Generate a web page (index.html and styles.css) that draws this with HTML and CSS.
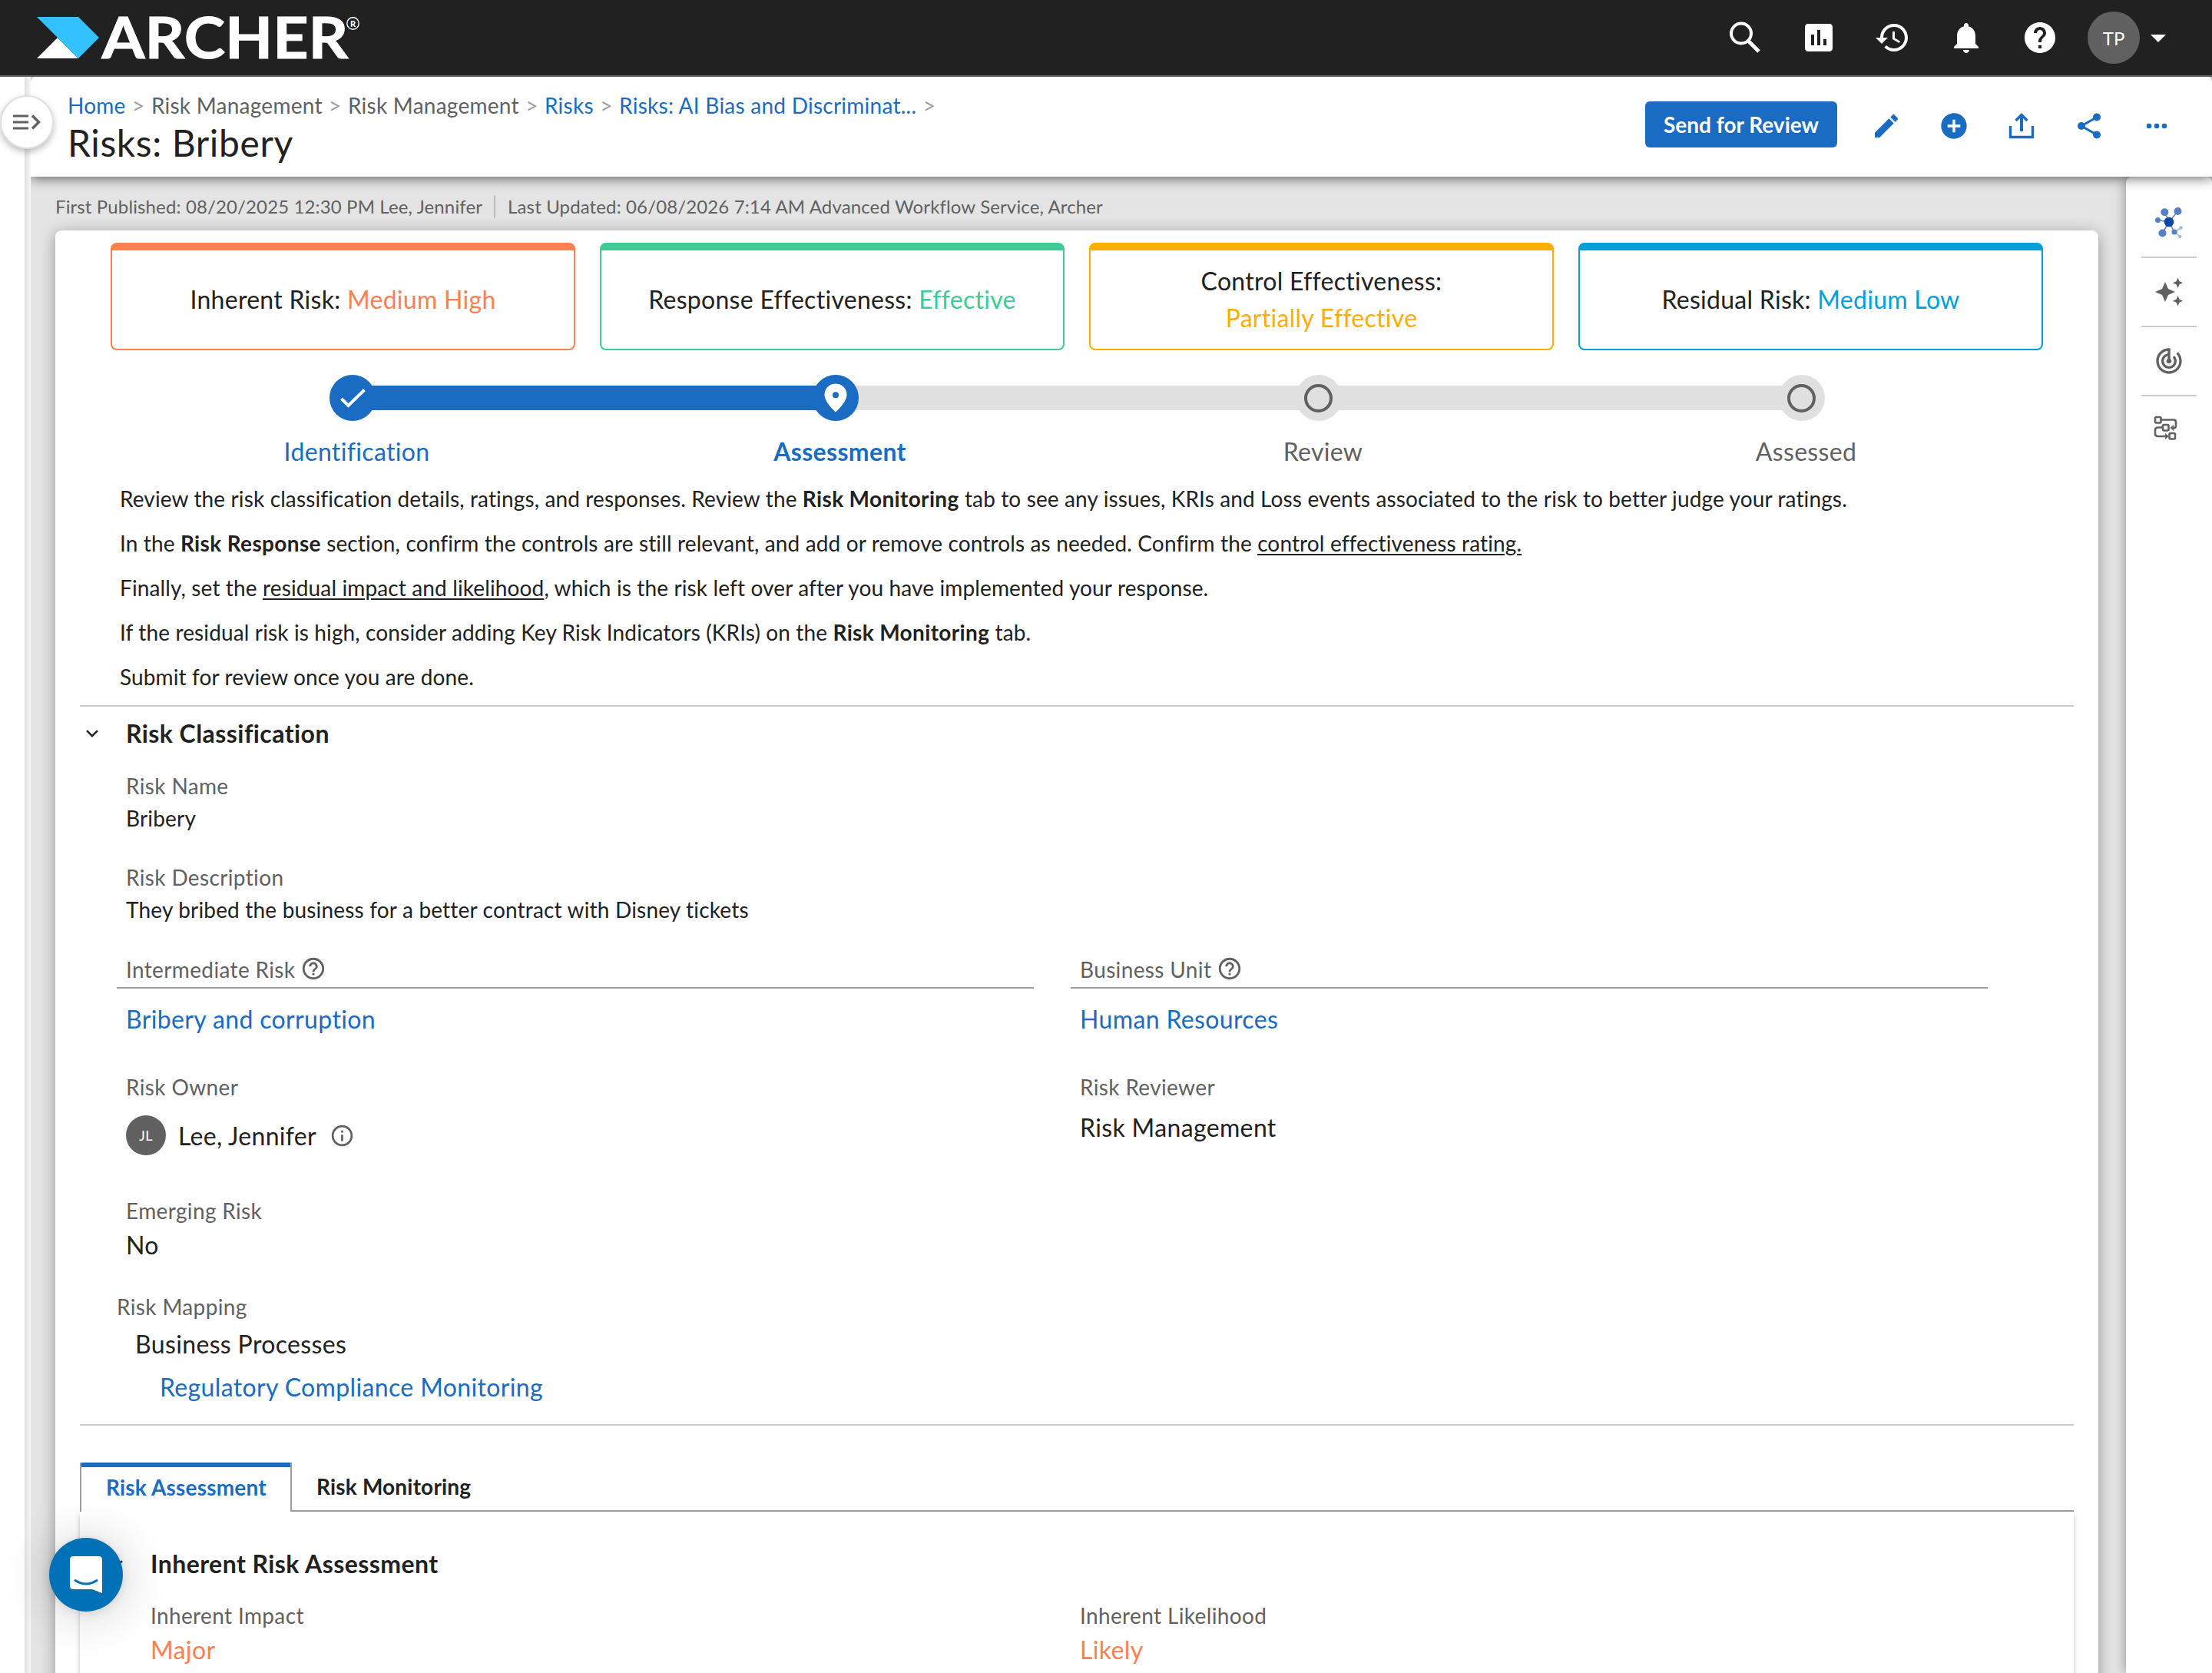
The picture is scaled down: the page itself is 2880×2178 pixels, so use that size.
FILE: index.html
```html
<!DOCTYPE html>
<html lang="en">
<head>
    <meta charset="UTF-8">
    <meta name="viewport" content="width=device-width, initial-scale=1.0">
    <title>Risks: Bribery</title>
    <link rel="stylesheet" href="styles.css">
</head>
<body>
    <header class="topbar">
        <svg class="logo" width="430" height="60" viewBox="0 0 430 60">
            <path d="M0 57 L27 30 L54 57 Z" fill="#fff"/>
            <path d="M0 3 H54 L81 30 L54 57 Z" fill="#33c1ff"/>
            <text class="logo-text" x="84.500" y="57" textLength="321" lengthAdjust="spacingAndGlyphs">ARCHER</text>
            <circle cx="411.500" cy="11.500" r="7.700" fill="none" stroke="#fff" stroke-width="1.400"/>
            <text class="logo-reg" x="408" y="15.500">R</text>
        </svg>
        <nav class="top-icons">
            <svg width="48" height="48" viewBox="0 0 48 48" fill="none" stroke="#fff"><circle cx="19" cy="18.500" r="13" stroke-width="4"/><path d="M29 29l13 13" stroke-width="5"/></svg>
            <svg width="48" height="48" viewBox="0 0 24 24" fill="#fff"><path d="M19 3H5c-1.100 0-2 .9-2 2v14c0 1.100.9 2 2 2h14c1.100 0 2-.9 2-2V5c0-1.100-.9-2-2-2zM9 17H7v-7h2v7zm4 0h-2V7h2v10zm4 0h-2v-4h2v4z"/></svg>
            <svg width="48" height="48" viewBox="0 0 24 24" fill="#fff"><path d="M13 3c-4.970 0-9 4.030-9 9H1l3.890 3.890.07.14L9 12H6c0-3.870 3.130-7 7-7s7 3.130 7 7-3.130 7-7 7c-1.930 0-3.680-.79-4.940-2.060l-1.420 1.420C8.270 19.990 10.510 21 13 21c4.970 0 9-4.030 9-9s-4.030-9-9-9zm-1 5v5l4.280 2.540.72-1.210-3.500-2.080V8H12z"/></svg>
            <svg width="48" height="48" viewBox="0 0 24 24" fill="#fff"><path d="M12 22c1.100 0 2-.9 2-2h-4c0 1.100.89 2 2 2zm6-6v-5c0-3.070-1.640-5.640-4.500-6.320V4c0-.83-.67-1.500-1.500-1.500s-1.500.67-1.500 1.500v.68C7.630 5.360 6 7.920 6 11v5l-2 2v1h16v-1l-2-2z"/></svg>
            <svg width="48" height="48" viewBox="0 0 24 24" fill="#fff"><path d="M12 2C6.480 2 2 6.480 2 12s4.480 10 10 10 10-4.480 10-10S17.520 2 12 2zm1 17h-2v-2h2v2zm2.070-7.750l-.9.920C13.450 12.900 13 13.500 13 15h-2v-.5c0-1.100.45-2.100 1.170-2.830l1.240-1.260c.37-.36.59-.86.59-1.410 0-1.100-.9-2-2-2s-2 .9-2 2H8c0-2.210 1.790-4 4-4s4 1.790 4 4c0 .88-.36 1.680-.93 2.250z"/></svg>
        </nav>
        <div class="avatar">TP</div>
        <svg class="caret" width="20" height="10" viewBox="0 0 20 10" fill="#fff"><path d="M0 0h20L10 10z"/></svg>
    </header>

    <div class="app">
        <div class="rail"></div>
        <div class="rail-edge"></div>
        <button class="rail-toggle">
            <svg width="36" height="20" viewBox="0 0 36 20" fill="none" stroke="#616161" stroke-width="3"><path d="M0 2h20M0 10h20M0 18h20"/><path d="M25 1.500l8.500 8.500-8.500 8.500" stroke-width="3.500"/></svg>
        </button>

        <div class="page">
            <div class="page-header">
                <div class="heading">
                    <div class="breadcrumb">
                        <a>Home</a><i>&gt;</i><span>Risk Management</span><i>&gt;</i><span>Risk Management</span><i>&gt;</i><a>Risks</a><i>&gt;</i><a>Risks: AI Bias and Discriminat...</a><i>&gt;</i>
                    </div>
                    <h1>Risks: Bribery</h1>
                </div>
                <div class="actions">
                    <button class="send">Send for Review</button>
                    <svg width="40" height="40" viewBox="0 0 24 24"><path d="M3 17.250V21h3.750L17.810 9.940l-3.750-3.750L3 17.250zM20.710 7.040c.39-.39.39-1.020 0-1.410l-2.340-2.340c-.39-.39-1.020-.39-1.410 0l-1.830 1.830 3.750 3.750 1.830-1.830z"/></svg>
                    <svg width="40" height="40" viewBox="0 0 24 24"><path d="M12 2C6.480 2 2 6.480 2 12s4.480 10 10 10 10-4.480 10-10S17.520 2 12 2zm5 11h-4v4h-2v-4H7v-2h4V7h2v4h4v2z"/></svg>
                    <svg class="line" width="40" height="40" viewBox="0 0 40 40"><path d="M5.500 20v14.500h29V20" stroke-width="3.400"/><path d="M20 27V7" stroke-width="4"/><path d="M12.500 13L20 5.500l7.500 7.500" stroke-width="3.400"/></svg>
                    <svg class="line" width="40" height="40" viewBox="0 0 40 40"><path d="M30 8.500L10 20l20 11.500" stroke-width="3"/><g class="dots"><circle cx="30" cy="8.500" r="5"/><circle cx="10" cy="20" r="5"/><circle cx="30" cy="31.500" r="5"/></g></svg>
                    <svg width="40" height="40" viewBox="0 0 40 40"><circle cx="10" cy="20" r="3.300"/><circle cx="20" cy="20" r="3.300"/><circle cx="30" cy="20" r="3.300"/></svg>
                </div>
            </div>

            <div class="page-body">
                <main class="content">
                    <div class="meta">
                        <span>First Published: 08/20/2025 12:30 PM Lee, Jennifer</span>
                        <span class="meta-updated">Last Updated: 06/08/2026 7:14 AM Advanced Workflow Service, Archer</span>
                    </div>

                    <div class="record">
                        <div class="ratings">
                            <div class="rating orange"><p>Inherent Risk: <em>Medium High</em></p></div>
                            <div class="rating green"><p>Response Effectiveness: <em>Effective</em></p></div>
                            <div class="rating amber"><p>Control Effectiveness:<br><em>Partially Effective</em></p></div>
                            <div class="rating blue"><p>Residual Risk: <em>Medium Low</em></p></div>
                        </div>

                        <div class="stepper">
                            <div class="step done">
                                <div class="track"><div class="node"><svg width="60" height="60" viewBox="0 0 60 60" fill="none" stroke="#fff" stroke-width="4"><path d="M15.500 31l9 9L45.500 19.500"/></svg></div></div>
                                <div class="step-label">Identification</div>
                            </div>
                            <div class="step current">
                                <div class="track"><div class="node"><svg width="60" height="60" viewBox="0 0 60 60" fill="#fff"><path fill-rule="evenodd" d="M30 11.500c-8.300 0-14.500 6.300-14.500 14.500 0 10 14.500 22.500 14.500 22.500S44.500 36 44.500 26c0-8.200-6.200-14.500-14.500-14.500zM30 22.200a4 4 0 1 1 0 8 4 4 0 0 1 0-8z"/></svg></div></div>
                                <div class="step-label">Assessment</div>
                            </div>
                            <div class="step">
                                <div class="track"><div class="node"><span class="ring"></span></div></div>
                                <div class="step-label">Review</div>
                            </div>
                            <div class="step">
                                <div class="track"><div class="node"><span class="ring"></span></div></div>
                                <div class="step-label">Assessed</div>
                            </div>
                        </div>

                        <div class="help-text">
                            <p>Review the risk classification details, ratings, and responses. Review the <b>Risk Monitoring</b> tab to see any issues, KRIs and Loss events associated to the risk to better judge your ratings.</p>
                            <p>In the <b>Risk Response</b> section, confirm the controls are still relevant, and add or remove controls as needed. Confirm the <u>control effectiveness rating.</u></p>
                            <p>Finally, set the <u>residual impact and likelihood</u>, which is the risk left over after you have implemented your response.</p>
                            <p>If the residual risk is high, consider adding Key Risk Indicators (KRIs) on the <b>Risk Monitoring</b> tab.</p>
                            <p>Submit for review once you are done.</p>
                        </div>

                        <section class="section">
                            <div class="section-title">
                                <svg width="16" height="10" viewBox="0 0 16 10" fill="none" stroke="#212121" stroke-width="2.400"><path d="M1 1.200l7 7 7-7"/></svg>
                                <h2>Risk Classification</h2>
                            </div>
                            <div class="field first">
                                <label>Risk Name</label>
                                <div class="text">Bribery</div>
                            </div>
                            <div class="field">
                                <label>Risk Description</label>
                                <div class="text">They bribed the business for a better contract with Disney tickets</div>
                            </div>
                            <div class="row">
                                <div class="field ref">
                                    <label>Intermediate Risk <svg width="34" height="34" viewBox="0 0 24 24" fill="#616161"><path d="M11 18h2v-2h-2v2zm1-16C6.480 2 2 6.480 2 12s4.480 10 10 10 10-4.480 10-10S17.520 2 12 2zm0 18c-4.410 0-8-3.590-8-8s3.590-8 8-8 8 3.590 8 8-3.590 8-8 8zm0-14c-2.210 0-4 1.790-4 4h2c0-1.100.9-2 2-2s2 .9 2 2c0 2-3 1.750-3 5h2c0-2.250 3-2.500 3-5 0-2.210-1.790-4-4-4z"/></svg></label>
                                    <div class="value"><a>Bribery and corruption</a></div>
                                </div>
                                <div class="field ref">
                                    <label>Business Unit <svg width="34" height="34" viewBox="0 0 24 24" fill="#616161"><path d="M11 18h2v-2h-2v2zm1-16C6.480 2 2 6.480 2 12s4.480 10 10 10 10-4.480 10-10S17.520 2 12 2zm0 18c-4.410 0-8-3.590-8-8s3.590-8 8-8 8 3.590 8 8-3.590 8-8 8zm0-14c-2.210 0-4 1.790-4 4h2c0-1.100.9-2 2-2s2 .9 2 2c0 2-3 1.750-3 5h2c0-2.250 3-2.500 3-5 0-2.210-1.790-4-4-4z"/></svg></label>
                                    <div class="value"><a>Human Resources</a></div>
                                </div>
                            </div>
                            <div class="row people">
                                <div class="field">
                                    <label>Risk Owner</label>
                                    <div class="person">
                                        <span class="initials">JL</span>
                                        <span>Lee, Jennifer</span>
                                        <svg width="33" height="33" viewBox="0 0 24 24" fill="#616161"><path d="M11 17h2v-6h-2v6zm1-15C6.480 2 2 6.480 2 12s4.480 10 10 10 10-4.480 10-10S17.520 2 12 2zm0 18c-4.410 0-8-3.590-8-8s3.590-8 8-8 8 3.590 8 8-3.590 8-8 8zM11 9h2V7h-2v2z"/></svg>
                                    </div>
                                </div>
                                <div class="field">
                                    <label>Risk Reviewer</label>
                                    <div class="value reviewer">Risk Management</div>
                                </div>
                            </div>
                            <div class="field emerging">
                                <label>Emerging Risk</label>
                                <div class="value">No</div>
                            </div>
                            <div class="mapping">
                                <label>Risk Mapping</label>
                                <div class="process">Business Processes</div>
                                <div class="process-item"><a>Regulatory Compliance Monitoring</a></div>
                            </div>
                        </section>

                        <div class="tabs">
                            <div class="tab active">Risk Assessment</div>
                            <div class="tab">Risk Monitoring</div>
                        </div>
                        <div class="tab-panel">
                            <div class="section-title">
                                <svg width="16" height="10" viewBox="0 0 16 10" fill="none" stroke="#212121" stroke-width="2.400"><path d="M1 1.200l7 7 7-7"/></svg>
                                <h2>Inherent Risk Assessment</h2>
                            </div>
                            <div class="row">
                                <div class="field">
                                    <label>Inherent Impact</label>
                                    <div class="value hot">Major</div>
                                </div>
                                <div class="field">
                                    <label>Inherent Likelihood</label>
                                    <div class="value hot">Likely</div>
                                </div>
                            </div>
                        </div>
                    </div>
                </main>

                <aside class="side">
                    <div class="side-item">
                        <svg width="40" height="44" viewBox="0 0 40 44"><g stroke="#5580c1" stroke-width="1.500"><path d="M20 21L14.500 8M20 21L31.500 7M20 21L5.500 18.500M20 21L11.500 35.500M20 21l7 13"/></g><path d="M27 34l8.500-5.500M27 34l7.500 6" stroke="#a3b9de" stroke-width="1.500"/><g fill="#5580c1"><circle cx="14.300" cy="8.300" r="5"/><circle cx="31.500" cy="7" r="5"/><circle cx="5.500" cy="18.500" r="3.500"/><circle cx="11.500" cy="35.500" r="5"/><circle cx="27" cy="34" r="3.600"/></g><circle cx="35.500" cy="28.500" r="2.200" fill="#a3b9de"/><circle cx="34.300" cy="40" r="2.200" fill="#a3b9de"/><circle cx="20" cy="21" r="6.300" fill="#0d47a1"/></svg>
                    </div>
                    <div class="side-item">
                        <svg width="40" height="40" viewBox="0 0 40 40" fill="#616161"><path d="M15 7l3.900 9.100L28 20l-9.100 3.900L15 33l-3.900-9.100L2 20l9.100-3.900zM31.500 1.500l2 4.700 4.700 2-4.700 2-2 4.700-2-4.700-4.700-2 4.700-2zM31.500 25l2 4.700 4.700 2-4.700 2-2 4.700-2-4.700-4.700-2 4.700-2z"/></svg>
                    </div>
                    <div class="side-item">
                        <svg width="40" height="40" viewBox="0 0 24 24" fill="#616161"><path d="M19.070 4.930l-1.410 1.410C19.100 7.790 20 9.790 20 12c0 4.420-3.580 8-8 8s-8-3.580-8-8c0-4.080 3.050-7.440 7-7.930v2.020C8.160 6.570 6 9.030 6 12c0 3.310 2.690 6 6 6s6-2.690 6-6c0-1.660-.67-3.160-1.760-4.240l-1.410 1.410C15.550 9.900 16 10.900 16 12c0 2.210-1.790 4-4 4s-4-1.790-4-4c0-1.860 1.280-3.410 3-3.860v2.140c-.6.350-1 .98-1 1.720 0 1.100.9 2 2 2s2-.9 2-2c0-.74-.4-1.380-1-1.720V2h-1C6.480 2 2 6.480 2 12s4.480 10 10 10 10-4.480 10-10c0-2.760-1.120-5.260-2.930-7.070z"/></svg>
                    </div>
                    <div class="side-item">
                        <svg class="flow" width="32" height="32" viewBox="0 0 32 32" fill="none" stroke="#616161" stroke-width="2.600"><rect x="2" y="2" width="7.500" height="7.500" rx="1.500"/><rect x="12" y="12" width="7.500" height="7.500" rx="1.500"/><rect x="20.500" y="23" width="7.500" height="7.500" rx="1.500"/><path d="M9.500 5.500H26q3 0 3 3v5q0 3-4 3"/><path d="M12 15.500H5.500Q2 15.500 2 19v4.500Q2 27 5.500 27H16"/><path d="M26 12v8l-4.500-4zM15 23v8l5-4z" fill="#616161" stroke="none"/></svg>
                    </div>
                </aside>
            </div>
        </div>
    </div>

    <button class="chat">
        <svg width="42" height="48" viewBox="0 0 42 48"><path d="M4.500 0h33Q42 0 42 4.500V48l-13-5H4.500Q0 43 0 38.500v-34Q0 0 4.500 0z" fill="#fff"/><path d="M7 31.500q14 9 28 0" fill="none" stroke="#0071b6" stroke-width="3" stroke-linecap="round"/></svg>
    </button>
</body>
</html>
```

FILE: styles.css
```css
* {
    box-sizing: border-box;
}
body, html {
    margin: 0;
    padding: 0;
    height: 100vh;
    overflow: hidden;
    font-family: Lato, sans-serif;
    font-size: 28px;
    color: #212121;
    background-color: #fff;
}
body {
    display: flex;
    flex-direction: column;
}
h1, h2, p {
    margin: 0;
}
button {
    border: none;
    padding: 0;
    font-family: inherit;
    display: flex;
    align-items: center;
    justify-content: center;
}
svg {
    display: block;
    flex: none;
    overflow: visible;
}
a {
    color: #196cc2;
}

/* top bar */
.topbar {
    flex: none;
    height: 100px;
    padding: 0 60px 0 48px;
    background-color: #212121;
    border-bottom: 2px solid #616161;
    display: flex;
    align-items: center;
}
.logo-text {
    font-size: 75px;
    font-weight: 700;
    fill: #fff;
    stroke: #fff;
    stroke-width: 1px;
}
.logo-reg {
    font-size: 11px;
    font-weight: 900;
    fill: #fff;
}
.top-icons {
    margin-left: auto;
    display: flex;
    gap: 48px;
}
.avatar {
    width: 68px;
    height: 68px;
    margin-left: 38px;
    border-radius: 50%;
    background-color: #616161;
    color: #fff;
    font-size: 24px;
    display: flex;
    align-items: center;
    justify-content: center;
}
.caret {
    margin: 2px 0 0 14px;
}

/* frame */
.app {
    flex: 1;
    min-height: 0;
    display: flex;
    position: relative;
}
.rail {
    width: 32px;
}
.rail-edge {
    width: 8px;
    background: linear-gradient(to right, #e0e0e0, #f8f8f8);
}
.rail-toggle {
    position: absolute;
    z-index: 3;
    left: 0;
    top: 24px;
    width: 70px;
    height: 70px;
    border: 2px solid #e0e0e0;
    border-radius: 50%;
    background-color: #fff;
    box-shadow: 0 4px 8px rgba(0, 0, 0, 0.25);
}
.page {
    flex: 1;
    min-width: 0;
    display: flex;
    flex-direction: column;
    background-color: #e4e4e4;
    overflow: hidden;
}
.page-header {
    flex: none;
    position: relative;
    z-index: 2;
    height: 130px;
    padding: 19px 52px 0 48px;
    display: flex;
    justify-content: space-between;
    background-color: #fff;
    border-radius: 6px 6px 0 0;
    box-shadow: 0 2px 16px rgba(0, 0, 0, 0.6);
}
.breadcrumb {
    display: flex;
    gap: 8.4px;
    line-height: 36px;
    letter-spacing: 0.25px;
    color: #616161;
}
.breadcrumb i {
    font-style: normal;
    color: #9e9e9e;
}
h1 {
    margin-top: 2px;
    font-size: 48px;
    font-weight: 400;
    line-height: 58px;
    letter-spacing: 0.6px;
}
.actions {
    height: 60px;
    margin-top: 13px;
    display: flex;
    align-items: center;
    gap: 48px;
    fill: #196cc2;
}
.actions svg {
    margin-top: 4px;
}
.actions .line {
    fill: none;
    stroke: #196cc2;
}
.actions .dots {
    fill: #196cc2;
    stroke: none;
}
.send {
    width: 250px;
    height: 60px;
    margin-right: -4px;
    border-radius: 6px;
    background-color: #196cc2;
    color: #fff;
    font-size: 28px;
    font-weight: 700;
}
.page-body {
    flex: 1;
    min-height: 0;
    display: flex;
}
.content {
    flex: 1;
    min-width: 0;
    padding: 19px 36px 0 32px;
}
.meta {
    display: flex;
    align-items: center;
    height: 40px;
    font-size: 24px;
    line-height: 30px;
    letter-spacing: 0.13px;
    color: #616161;
}
.meta-updated {
    margin-left: 15px;
    padding-left: 16px;
    border-left: 2px solid #bdbdbd;
}
.record {
    height: 1900px;
    margin-top: 11px;
    padding: 16px 32px 0;
    border-radius: 8px;
    background-color: #fff;
    box-shadow: 0 4px 20px rgba(0, 0, 0, 0.35);
}

/* rating cards */
.ratings {
    display: flex;
    gap: 32px;
    padding: 0 40px;
}
.rating {
    flex: 1;
    height: 140px;
    border: 2px solid;
    border-top-width: 10px;
    border-radius: 8px;
    display: flex;
    align-items: center;
    justify-content: center;
    text-align: center;
    font-size: 32px;
    line-height: 48px;
    letter-spacing: 0.28px;
}
.rating p {
    color: #212121;
}
.rating em {
    font-style: normal;
}
.orange, .orange em {
    color: #ff7f50;
}
.green, .green em {
    color: #3dcc96;
}
.amber, .amber em {
    color: #ffae00;
}
.blue, .blue em {
    color: #039fdb;
}

/* workflow steps */
.stepper {
    display: flex;
    margin-top: 32px;
    padding: 0 40px;
}
.step {
    flex: 1;
    color: #616161;
    font-size: 32px;
    letter-spacing: 0.34px;
}
.track {
    height: 60px;
    display: flex;
    justify-content: center;
    background: linear-gradient(#e0e0e0, #e0e0e0) center / 100% 32px no-repeat;
}
.step:first-child .track {
    background: linear-gradient(#196cc2, #196cc2) right / 50% 32px no-repeat;
}
.step:last-child .track {
    background-position: left;
    background-size: 50% 32px;
}
.current .track {
    background: linear-gradient(to right, #196cc2 50%, #e0e0e0 50%) center / 100% 32px no-repeat;
}
.node {
    width: 60px;
    height: 60px;
    border-radius: 50%;
    background-color: #e0e0e0;
    display: flex;
    align-items: center;
    justify-content: center;
}
.done .node, .current .node {
    background-color: #196cc2;
}
.ring {
    width: 37px;
    height: 37px;
    border: 4px solid #616161;
    border-radius: 50%;
}
.step-label {
    margin-top: 20px;
    padding-left: 12px;
    line-height: 40px;
    text-align: center;
}
.done, .current {
    color: #196cc2;
}
.current {
    font-weight: 700;
}
.help-text {
    margin-top: 12px;
    padding: 0 52px 8px;
    line-height: 58px;
    letter-spacing: 0.13px;
    white-space: nowrap;
}
.help-text b {
    letter-spacing: 0.35px;
}
u {
    text-underline-offset: 3px;
}

/* sections and fields */
.section {
    height: 938px;
    padding: 15px 72px 0 8px;
    border-top: 2px solid #ccc;
    border-bottom: 2px solid #ccc;
}
.section-title {
    display: flex;
    align-items: center;
    gap: 36px;
}
h2 {
    font-size: 32px;
    line-height: 40px;
    letter-spacing: 0.44px;
}
label {
    display: flex;
    align-items: center;
    gap: 7px;
    line-height: 42px;
    letter-spacing: 0.36px;
    color: #616161;
}
.field {
    margin-top: 35px;
    padding-left: 52px;
}
.field.first {
    margin-top: 27px;
}
.text {
    line-height: 42px;
    letter-spacing: 0.18px;
}
.value {
    font-size: 32px;
    line-height: 48px;
    letter-spacing: 0.36px;
}
.row {
    display: grid;
    grid-template-columns: 1194px 1194px;
    column-gap: 48px;
}
.section .row {
    margin-left: 40px;
}
.section .row .field {
    padding-left: 12px;
}
.ref label {
    height: 46px;
    margin: 0 0 16px -12px;
    padding: 0 0 2px 12px;
    border-bottom: 2px solid #9e9e9e;
}
.ref label svg {
    margin-top: -2px;
}
.section .ref {
    margin-top: 36px;
}
.people .field {
    margin-top: 43px;
}
.person {
    display: flex;
    align-items: center;
    height: 52px;
    margin-top: 16px;
    font-size: 32px;
    letter-spacing: 0.3px;
}
.person svg {
    margin-left: 17px;
}
.initials {
    width: 52px;
    height: 52px;
    margin-right: 16px;
    border-radius: 50%;
    background-color: #616161;
    color: #fff;
    font-size: 18px;
    display: flex;
    align-items: center;
    justify-content: center;
}
.reviewer {
    margin-top: 8px;
}
.emerging {
    margin-top: 51px;
}
.mapping {
    margin-top: 35px;
    padding-left: 40px;
    font-size: 32px;
    line-height: 48px;
    letter-spacing: 0.36px;
}
.mapping label {
    font-size: 28px;
}
.process {
    margin-top: 4px;
    padding-left: 24px;
}
.process-item {
    margin-top: 8px;
    padding-left: 56px;
}

/* tabs */
.tabs {
    display: flex;
    height: 64px;
    margin-top: 48px;
    background: linear-gradient(#9e9e9e, #9e9e9e) bottom / 100% 2px no-repeat;
    font-weight: 700;
    line-height: 62px;
    letter-spacing: 0.18px;
}
.tab {
    padding: 0 32px;
}
.tab.active {
    width: 276px;
    padding: 1px 0 0 32px;
    border: solid #9e9e9e;
    border-width: 0 2px;
    background-color: #fff;
    box-shadow: inset 0 6px #196cc2;
    color: #196cc2;
}
.tab-panel {
    height: 400px;
    padding: 48px 0 0 40px;
    box-shadow: 0 4px 6px rgba(0, 0, 0, 0.25);
}
.tab-panel .field {
    margin-top: 26px;
}
.tab-panel .row .field + .field {
    padding-left: 20px;
}
.hot {
    color: #ff7f50;
}

/* right side panel */
.side {
    width: 112px;
    padding: 16px 20px 0;
    border-radius: 8px 8px 0 0;
    background-color: #fff;
    box-shadow: 0 0 16px rgba(0, 0, 0, 0.4);
}
.side-item {
    height: 90px;
    display: flex;
    align-items: center;
    justify-content: center;
    border-bottom: 2px solid #ccc;
}
.side-item:last-child {
    height: 82px;
    border-bottom: none;
}
.flow {
    margin-right: 8px;
}

.chat {
    position: absolute;
    z-index: 5;
    left: 64px;
    top: 2002px;
    width: 96px;
    height: 96px;
    border-radius: 50%;
    background-color: #0071b6;
    box-shadow: 0 2px 12px rgba(0, 0, 0, 0.1), 0 4px 64px rgba(0, 0, 0, 0.2);
}
```
